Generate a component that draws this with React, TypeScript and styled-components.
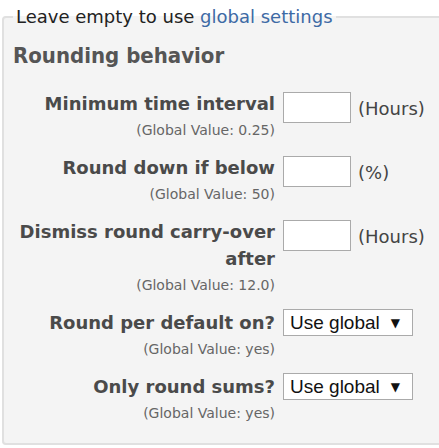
import styled, { createGlobalStyle } from "styled-components";

const GlobalStyle = createGlobalStyle`
  html, body {
    margin: 0;
    padding: 0;
    background: #ffffff;
    overflow: hidden;
  }
  body {
    font-family: "DejaVu Sans", Verdana, sans-serif;
  }
`;

const Page = styled.div`
  width: 439px;
  height: 448px;
  padding: 6px 0 0 2px;
  box-sizing: border-box;
  overflow: hidden;
`;

const Fieldset = styled.fieldset`
  margin: 0;
  width: 460px;
  box-sizing: border-box;
  padding: 0 0 21px 9px;
  background: #f4f4f4;
  border: 2px solid #e0e0e0;
  border-radius: 4px;
`;

const Legend = styled.legend`
  font-size: 18px;
  color: #222;
  padding: 0 3px;
  margin-left: 0;
  line-height: 22px;
`;

const Link = styled.a`
  color: #3d6aa5;
  text-decoration: none;
`;

const Title = styled.h2`
  margin: 14px 0 20px 0;
  font-family: "DejaVu Sans Condensed", "DejaVu Sans", sans-serif;
  font-size: 22px;
  line-height: 28px;
  font-weight: bold;
  color: #555;
`;

const List = styled.div`
  display: flex;
  flex-direction: column;
  gap: 15px;
`;

const Row = styled.div`
  display: flex;
  align-items: flex-start;
`;

const LabelCol = styled.div`
  width: 262px;
  flex: none;
  text-align: right;
`;

const Label = styled.div`
  font-size: 18px;
  font-weight: bold;
  color: #4a4a4a;
  line-height: 27px;
`;

const Hint = styled.div`
  font-size: 14px;
  color: #666;
  line-height: 18px;
  margin-top: 4px;
`;

const Control = styled.div`
  display: flex;
  align-items: center;
  gap: 7px;
  margin-left: 8px;
`;

const TextInput = styled.input`
  width: 68px;
  height: 31px;
  box-sizing: border-box;
  border: 1px solid #aaa;
  background: #fff;
  margin: 2px 0 0 0;
`;

const Unit = styled.span`
  font-size: 18px;
  color: #444;
  line-height: 27px;
  margin-top: 3px;
`;

const Select = styled.div`
  width: 130px;
  height: 27px;
  box-sizing: border-box;
  border: 1px solid #aaa;
  background: #fff;
  display: flex;
  align-items: center;
  padding: 0 12px 0 6px;
  font-family: "Liberation Sans", Arial, sans-serif;
  font-size: 19px;
  color: #111;
`;

const Arrow = styled.span`
  margin-left: auto;
  font-family: "DejaVu Sans", sans-serif;
  font-size: 12px;
  color: #111;
`;

interface Item {
  label: string;
  hint: string;
  unit?: string;
  select?: boolean;
}

const items: Item[] = [
  { label: "Minimum time interval", hint: "(Global Value: 0.25)", unit: "(Hours)" },
  { label: "Round down if below", hint: "(Global Value: 50)", unit: "(%)" },
  { label: "Dismiss round carry-over after", hint: "(Global Value: 12.0)", unit: "(Hours)" },
  { label: "Round per default on?", hint: "(Global Value: yes)", select: true },
  { label: "Only round sums?", hint: "(Global Value: yes)", select: true },
];

export default function App() {
  return (
    <Page>
      <GlobalStyle />
      <Fieldset>
        <Legend>
          Leave empty to use <Link href="#">global settings</Link>
        </Legend>
        <Title>Rounding behavior</Title>
        <List>
          {items.map((it) => (
            <Row key={it.label}>
              <LabelCol>
                <Label>{it.label}</Label>
                <Hint>{it.hint}</Hint>
              </LabelCol>
              <Control>
                {it.select ? (
                  <Select>
                    <span>Use global</span>
                    <Arrow>▼</Arrow>
                  </Select>
                ) : (
                  <>
                    <TextInput type="text" />
                    <Unit>{it.unit}</Unit>
                  </>
                )}
              </Control>
            </Row>
          ))}
        </List>
      </Fieldset>
    </Page>
  );
}
